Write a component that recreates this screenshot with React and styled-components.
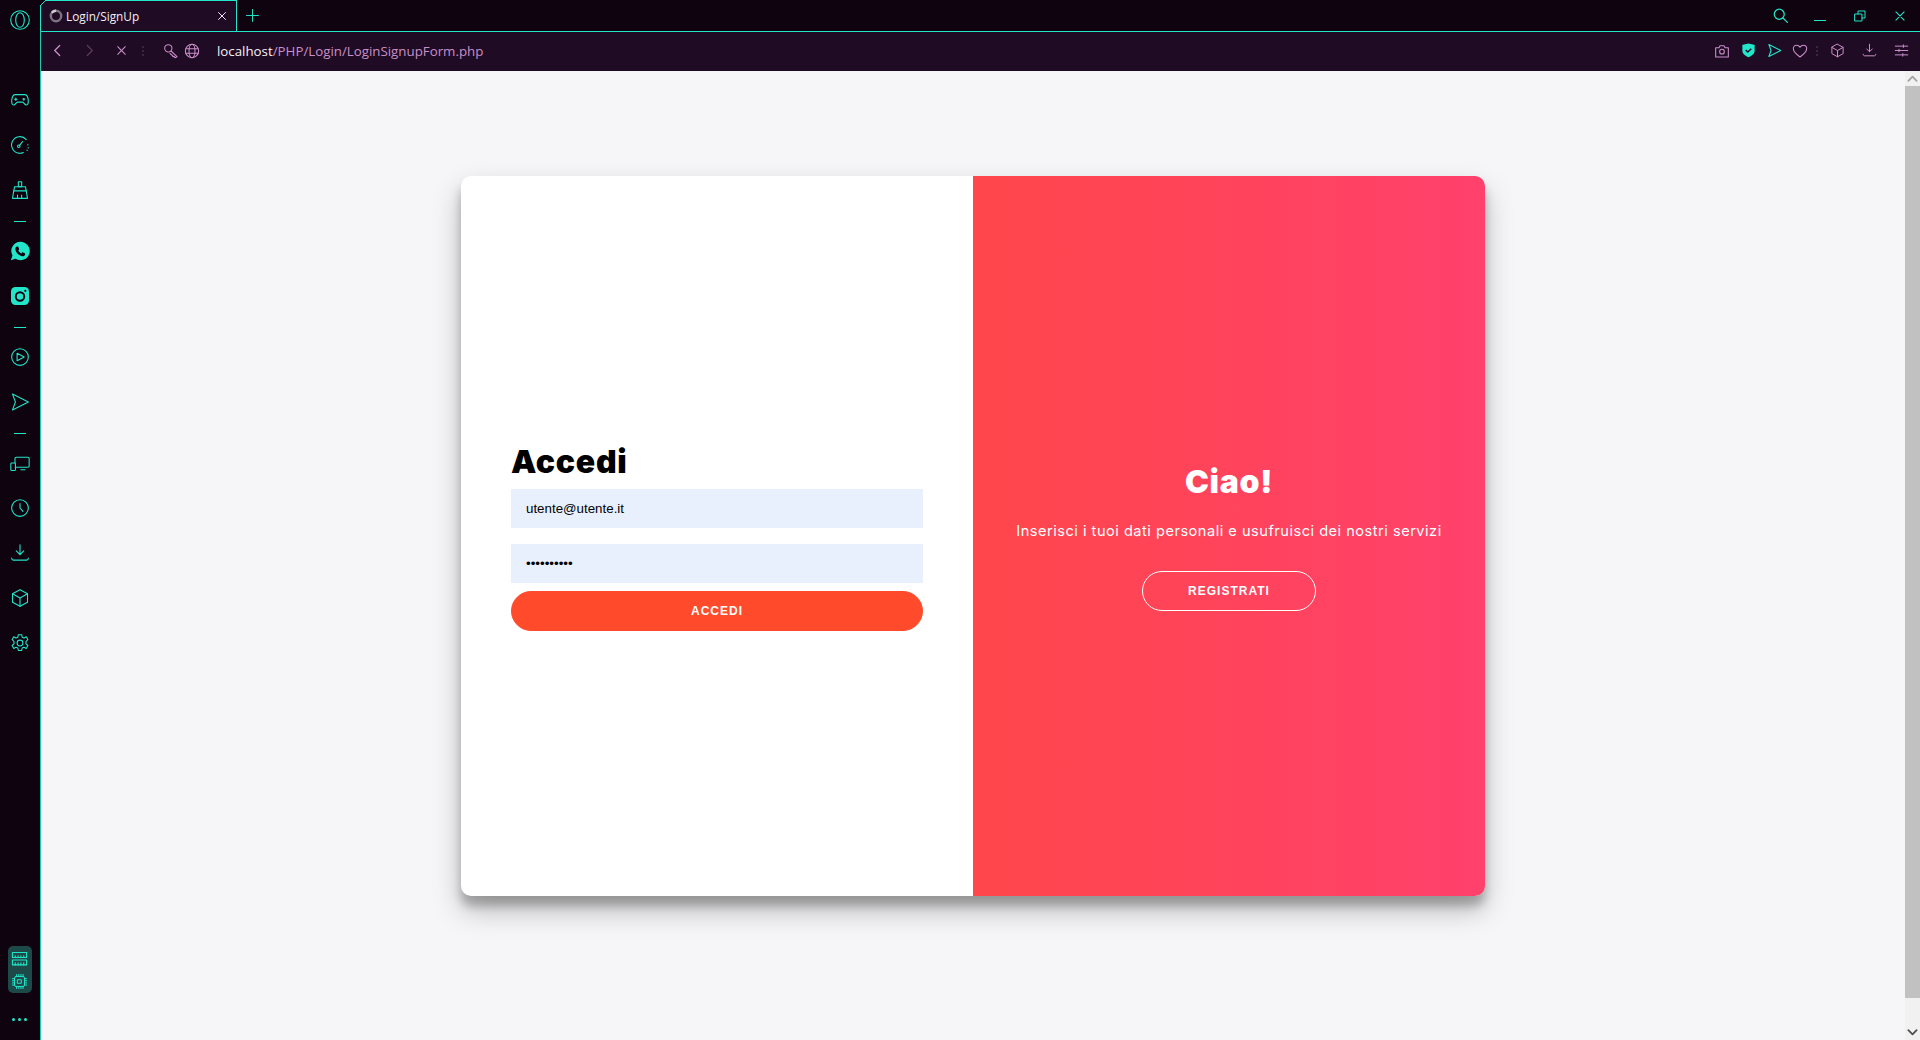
import React from 'react';
import styled, { createGlobalStyle } from 'styled-components';

const TEAL = '#21e6c9';
const PINK = '#c98fc9';

const GlobalStyle = createGlobalStyle`
	html, body {
		margin: 0;
		padding: 0;
		height: 100%;
		overflow: hidden;
		background: #f6f5f7;
	}
	* {
		box-sizing: border-box;
	}
`;

function Icon({ size = 20, color = 'currentColor', width = 1.5, fill = 'none', viewBox = '0 0 24 24', children }) {
	return (
		<svg width={size} height={size} viewBox={viewBox} fill={fill} stroke={color} strokeWidth={width} strokeLinecap="round" strokeLinejoin="round">
			{children}
		</svg>
	);
}

const icons = {
	gamepad: <><path d="M6.500 5.500h11c2.600 0 4 2.400 4.400 6.500.3 3.400-.3 6-2.300 6-2.200 0-3-3.500-4.600-3.500H9c-1.600 0-2.400 3.500-4.600 3.500-2 0-2.600-2.600-2.300-6C2.500 7.900 3.900 5.500 6.500 5.500z" /><path d="M7 9.500v3M5.500 11h3" /><circle cx="16.500" cy="11" r=".8" /></>,
	gauge: <><path d="M19.500 5.500A10 10 0 1 0 12 22a10 10 0 0 0 4-1" /><circle cx="10.500" cy="13.500" r="1.500" /><path d="M11.500 12.500 15 8" /><path d="M21.500 11.500v.5M21.800 15v.5M20.500 18v.5" /></>,
	brush: <><path d="M10 2h4v6h-4z" /><path d="M5.500 8h13l1 5h-15z" /><path d="M4.500 13 3 22h18l-1.500-9" /><path d="M9 22v-4M14 22v-4" /></>,
	play: <><circle cx="12" cy="12" r="10" /><path d="M8.500 7.500 17 12l-8.500 4.500z" /></>,
	send: <path d="M3 2.500 22 12 3 21.500 6.500 12z" />,
	devices: <><path d="M6 12V6.500A1.500 1.500 0 0 1 7.500 5h14A1.500 1.500 0 0 1 23 6.500v9a1.500 1.500 0 0 1-1.500 1.500H7" /><path d="M13 20h5" /><rect x="1" y="12" width="5.500" height="9" rx="1" /></>,
	clock: <><circle cx="12" cy="12" r="10" /><path d="M12 6.500V12l3.500 4" /></>,
	download: <><path d="M12 2v12M7.500 9.500 12 14l4.500-4.500" /><path d="M2 18c0 1.500.8 2.500 2 2.500h16c1.200 0 2-1 2-2.500" /></>,
	box: <><path d="M12 2 21 7v10l-9 5-9-5V7z" /><path d="M3 7l9 5 9-5M12 12v10" /></>,
	gear: <><circle cx="12" cy="12" r="3.500" /><path d="M10 2h4l.6 3 2.200 1 2.700-1.500 2 3.500-2.300 2v3l2.300 2-2 3.500-2.700-1.500-2.200 1-.6 3h-4l-.6-3-2.200-1-2.700 1.500-2-3.500 2.300-2v-3l-2.300-2 2-3.500L7.200 6l2.200-1z" /></>,
	back: <path d="M15.500 4 7.500 12l8 8" />,
	forward: <path d="M8.500 4l8 8-8 8" />,
	close: <path d="M5 5l14 14M19 5 5 19" />,
	key: <><circle cx="8" cy="8" r="5.500" /><path d="M12 12l9 8.500-3 1.500-1.500-2-1.500.5-1-2-1-.5-2.500-2.500" /></>,
	globe: <><circle cx="12" cy="12" r="10" /><ellipse cx="12" cy="12" rx="4.500" ry="10" /><path d="M2.800 8.500h18.400M2.800 15.500h18.400" /></>,
	camera: <><path d="M2.500 7h5l1.500-3h6l1.500 3h5v14h-19z" /><circle cx="12" cy="13" r="3.500" /></>,
	heart: <path d="M12 21C6 16.500 2 13 2 8.500 2 5.500 4.300 3.500 7 3.500c2 0 3.800 1 5 3 1.200-2 3-3 5-3 2.700 0 5 2 5 5 0 4.500-4 8-10 12.500z" />,
	sliders: <><path d="M2 5h20M2 12h20M2 19h20" /><path d="M15 3v4M8 10v4M14 17v4" /></>,
	search: <><circle cx="10" cy="10" r="8" /><path d="M16 16l7 7" /></>,
	restore: <><rect x="2" y="8" width="14" height="14" /><path d="M8 8V2h14v14h-6" /></>,
	ram: <><rect x="2" y="3.500" width="20" height="7" /><rect x="2" y="14" width="20" height="7" /><path d="M6 8v2.500M10 8v2.500M14 8v2.500M18 8v2.500M6 18v3M10 18v3M14 18v3M18 18v3" /></>,
	cpu: <><rect x="5" y="5" width="14" height="14" rx="2" /><rect x="9.500" y="9.500" width="5" height="5" /><path d="M8 2v3M11 2v3M14 2v3M17 2v3M8 19v3M11 19v3M14 19v3M17 19v3M2 8h3M2 11h3M2 14h3M2 17h3M19 8h3M19 11h3M19 14h3M19 17h3" /></>,
};

function WhatsappIcon() {
	return (
		<svg width="20" height="20" viewBox="0 0 24 24" aria-hidden="true">
			<path fill={TEAL} d="M12.500 1A11 11 0 0 0 3 17.500L1 23l5.800-1.700A11 11 0 1 0 12.500 1z" />
			<path fill="#0e030f" d="M8.800 6.500c.6 0 .9.100 1.200.8l.9 2.100c.1.400 0 .8-.3 1.100l-.7.900c.9 1.700 2.100 2.800 3.800 3.600l1-1.100c.3-.3.600-.4 1-.2l2 1c.5.300.6.600.5 1.100-.3 1.700-1.700 2.500-3.200 2.400-4.100-.4-8.300-4.400-8.600-8.600-.1-1.500.9-3.100 2.400-3.100z" />
		</svg>
	);
}

function InstagramIcon() {
	return (
		<svg width="18" height="18" viewBox="0 0 18 18" aria-hidden="true">
			<rect width="18" height="18" rx="4.500" fill={TEAL} />
			<circle cx="9" cy="9.500" r="4.200" fill="none" stroke="#0e030f" strokeWidth="2" />
			<circle cx="14.300" cy="3.800" r="1.100" fill="#0e030f" />
		</svg>
	);
}

function ShieldIcon() {
	return (
		<svg width="13" height="15" viewBox="0 0 14 15" aria-hidden="true">
			<path fill={TEAL} d="M1 1.200 7 0l6 1.200c.4.100.6.300.6.700v6c0 3-2.800 5.600-6.600 7C3.200 13.500.4 10.900.4 7.900v-6c0-.4.200-.6.600-.7z" />
			<path fill="none" stroke="#1f0b23" strokeWidth="1.600" d="M4 7l2.200 2.200L10 5.600" />
		</svg>
	);
}

function Spinner() {
	return (
		<svg width="14" height="14" viewBox="0 0 14 14" aria-hidden="true">
			<circle cx="7" cy="7" r="5.200" fill="none" stroke="#7d7482" strokeWidth="2.400" />
			<path d="M2.800 3.800A5.200 5.200 0 0 1 7 1.800" fill="none" stroke="#cfc9d2" strokeWidth="2.400" />
		</svg>
	);
}

function OperaLogo() {
	return (
		<svg width="20" height="20" viewBox="0 0 20 20" fill="none" stroke={TEAL} strokeWidth="1.100" aria-hidden="true">
			<circle cx="10" cy="10" r="9.300" />
			<ellipse cx="10" cy="10" rx="4.300" ry="7.300" />
		</svg>
	);
}

const sidebarItems = [
	'gamepad', 'gauge', 'brush', 'sep',
	'whatsapp', 'instagram', 'sep',
	'play', 'send', 'sep',
	'devices', 'clock', 'download', 'box', 'gear',
];

export default function App() {
	return (
		<Browser>
			<GlobalStyle />
			<Sidebar>
				<LogoSlot><OperaLogo /></LogoSlot>
				{sidebarItems.map((name, i) => {
					if (name === 'sep') return <SideSep key={i} />;
					return (
						<SideSlot key={i}>
							{name === 'whatsapp' && <WhatsappIcon />}
							{name === 'instagram' && <InstagramIcon />}
							{icons[name] && <Icon size={20} color={TEAL} width={1.3}>{icons[name]}</Icon>}
						</SideSlot>
					);
				})}
				<MonitorPill>
					<Icon size={17} color={TEAL} width={1.5}>{icons.ram}</Icon>
					<Icon size={17} color={TEAL} width={1.4}>{icons.cpu}</Icon>
				</MonitorPill>
				<MoreDots><span /><span /><span /></MoreDots>
			</Sidebar>

			<Main>
				<TabStrip>
					<Tab>
						<CornerCut viewBox="0 0 6 6" width="6" height="6">
							<path d="M0 6V0H6z" fill="#0e030f" />
							<path d="M0 6 6 0" stroke={TEAL} strokeWidth="1" />
						</CornerCut>
						<Spinner />
						<TabTitle>Login/SignUp</TabTitle>
						<TabClose><Icon size={12} color="#f0e8f0" width={2}>{icons.close}</Icon></TabClose>
					</Tab>
					<NewTab>
						<Icon size={13} color={TEAL} width={1.8}><path d="M12 1v22M1 12h22" /></Icon>
					</NewTab>
					<WindowControls>
						<WinBtn><Icon size={15} color={TEAL} width={2}>{icons.search}</Icon></WinBtn>
						<WinBtn><MinimizeBar /></WinBtn>
						<WinBtn><Icon size={12} color={TEAL} width={2}>{icons.restore}</Icon></WinBtn>
						<WinBtn><Icon size={14} color={TEAL} width={1.8}>{icons.close}</Icon></WinBtn>
					</WindowControls>
				</TabStrip>

				<AddressBar>
					<NavBtn><Icon size={15} color={PINK} width={2}>{icons.back}</Icon></NavBtn>
					<NavBtn><Icon size={15} color="#5c3a5e" width={2}>{icons.forward}</Icon></NavBtn>
					<NavBtn><Icon size={13} color={PINK} width={2}>{icons.close}</Icon></NavBtn>
					<BarDots />
					<SiteIcons>
						<Icon size={16} color={PINK} width={1.6}>{icons.key}</Icon>
						<Icon size={16} color={PINK} width={1.6}>{icons.globe}</Icon>
					</SiteIcons>
					<Url><strong>localhost</strong>/PHP/Login/LoginSignupForm.php</Url>
					<BarTools>
						<ToolBtn><Icon size={16} color={PINK} width={1.6}>{icons.camera}</Icon></ToolBtn>
						<ToolBtn><ShieldIcon /></ToolBtn>
						<ToolBtn><Icon size={15} color={TEAL} width={1.8}>{icons.send}</Icon></ToolBtn>
						<ToolBtn><Icon size={16} color={PINK} width={1.6}>{icons.heart}</Icon></ToolBtn>
						<BarDots $right />
						<ToolBtn $wide><Icon size={15} color={PINK} width={1.6}>{icons.box}</Icon></ToolBtn>
						<ToolBtn $wide><Icon size={15} color={PINK} width={1.6}>{icons.download}</Icon></ToolBtn>
						<ToolBtn $wide><Icon size={15} color={PINK} width={1.6}>{icons.sliders}</Icon></ToolBtn>
					</BarTools>
				</AddressBar>

				<Viewport>
					<Page>
						<Card>
							<FormPanel>
								<Title>Accedi</Title>
								<Field type="email" defaultValue="utente@utente.it" />
								<Field type="password" defaultValue="0123456789" />
								<SubmitButton>Accedi</SubmitButton>
							</FormPanel>
							<OverlayPanel>
								<Title $light>Ciao!</Title>
								<Lead>Inserisci i tuoi dati personali e usufruisci dei nostri servizi</Lead>
								<GhostButton>Registrati</GhostButton>
							</OverlayPanel>
						</Card>
					</Page>
					<Scrollbar>
						<ScrollArrow>
							<Icon size={11} color="#a3a3a3" width={4}><path d="M3 17 12 8l9 9" /></Icon>
						</ScrollArrow>
						<ScrollThumb />
						<ScrollArrow>
							<Icon size={11} color="#505050" width={4}><path d="M3 7l9 9 9-9" /></Icon>
						</ScrollArrow>
					</Scrollbar>
				</Viewport>
			</Main>
		</Browser>
	);
}

const Browser = styled.div`
	display: flex;
	width: 1920px;
	height: 1040px;
	overflow: hidden;
`;

const Sidebar = styled.aside`
	display: flex;
	flex-direction: column;
	align-items: center;
	flex: 0 0 41px;
	height: 100%;
	padding-right: 1px;
	background: #0e030f;
	border-right: 1px solid #1fc9b0;
`;

const LogoSlot = styled.div`
	flex: 0 0 77.5px;
	padding-top: 10px;
`;

const SideSlot = styled.div`
	display: flex;
	align-items: center;
	justify-content: center;
	flex: 0 0 45px;
	width: 100%;
`;

const SideSep = styled.div`
	flex: 0 0 1px;
	width: 12px;
	margin: 8px 0 7px;
	background: ${TEAL};
`;

const MonitorPill = styled.div`
	display: flex;
	flex-direction: column;
	align-items: center;
	justify-content: space-between;
	width: 24px;
	height: 47px;
	margin-top: auto;
	padding: 4px 0 3px;
	border-radius: 5px;
	background: #1d4a48;
`;

const MoreDots = styled.div`
	display: flex;
	justify-content: center;
	gap: 3px;
	height: 47px;
	padding-top: 25px;

	span {
		width: 3px;
		height: 3px;
		border-radius: 50%;
		background: ${TEAL};
	}
`;

const Main = styled.div`
	display: flex;
	flex-direction: column;
	flex: 1;
	min-width: 0;
`;

const TabStrip = styled.div`
	display: flex;
	align-items: stretch;
	flex: 0 0 31px;
	background: #0e030f;
	border-bottom: 1px solid ${TEAL};
`;

const Tab = styled.div`
	position: relative;
	display: flex;
	align-items: center;
	flex: 0 0 197px;
	height: 31px;
	margin-left: -1px;
	padding: 0 8px 1px 8px;
	background: #1f0b23;
	border-top: 1px solid ${TEAL};
	border-left: 1px solid ${TEAL};
	border-right: 1px solid ${TEAL};
`;

const CornerCut = styled.svg`
	position: absolute;
	top: -1px;
	left: -1px;
`;

const TabTitle = styled.span`
	margin-left: 3px;
	color: #f4eef4;
	font: 11.800px "Open Sans", sans-serif;
`;

const TabClose = styled.span`
	display: flex;
	margin-left: auto;
`;

const NewTab = styled.div`
	display: flex;
	align-items: center;
	justify-content: center;
	width: 30px;
`;

const WindowControls = styled.div`
	display: flex;
	margin-left: auto;
`;

const WinBtn = styled.div`
	display: flex;
	align-items: center;
	justify-content: center;
	width: 40px;
`;

const MinimizeBar = styled.span`
	width: 12px;
	height: 1px;
	margin-top: 10px;
	background: ${TEAL};
`;

const AddressBar = styled.div`
	display: flex;
	align-items: center;
	flex: 0 0 39px;
	padding: 0 0 2px;
	background: #1f0b23;
`;

const NavBtn = styled.div`
	display: flex;
	align-items: center;
	justify-content: center;
	flex: 0 0 32px;
`;

const BarDots = styled.span`
	flex: 0 0 2px;
	height: 10px;
	margin: ${(p) => (p.$right ? '0 3px' : '0 3px 0 5px')};
	background: repeating-linear-gradient(#3d2440 0 2px, transparent 2px 4px);
`;

const SiteIcons = styled.div`
	display: flex;
	align-items: center;
	gap: 5px;
	margin-left: 16px;
`;

const Url = styled.div`
	margin-left: 17px;
	color: ${PINK};
	font: 13.300px "Open Sans", sans-serif;

	strong {
		color: #f6f0f6;
		font-weight: 400;
	}
`;

const BarTools = styled.div`
	display: flex;
	align-items: center;
	margin-left: auto;
	padding-right: 3px;
`;

const ToolBtn = styled.div`
	display: flex;
	align-items: center;
	justify-content: center;
	width: ${(p) => (p.$wide ? '32px' : '26px')};
`;

const Viewport = styled.div`
	display: flex;
	flex: 1;
	min-height: 0;
`;

const Page = styled.main`
	display: flex;
	justify-content: center;
	flex: 1;
	padding-top: 105px;
	background: #f6f5f7;
`;

const Card = styled.div`
	display: flex;
	width: 1024px;
	height: 720px;
	overflow: hidden;
	border-radius: 10px;
	background: #fff;
	box-shadow: 0 14px 28px rgba(0, 0, 0, 0.25), 0 10px 10px rgba(0, 0, 0, 0.22);
`;

const FormPanel = styled.form`
	display: flex;
	flex-direction: column;
	justify-content: center;
	flex: 0 0 512px;
	padding: 0 50px;
`;

const OverlayPanel = styled.div`
	display: flex;
	flex-direction: column;
	align-items: center;
	justify-content: center;
	flex: 0 0 512px;
	padding: 0 40px;
	background: linear-gradient(to right, #ff464b, #ff416c);
	color: #fff;
`;

const Title = styled.h1`
	margin: 0;
	color: ${(p) => (p.$light ? '#fff' : '#000')};
	font: 900 32px/39px Inter, sans-serif;
	letter-spacing: 0.7px;
`;

const Field = styled.input`
	display: block;
	width: 100%;
	height: 39px;
	margin: 8px 0;
	padding: 0 15px;
	border: none;
	outline: none;
	background: #e8f0fe;
	color: #000;
	font: 13.333px "Liberation Sans", Arial, sans-serif;
`;

const BaseButton = styled.button`
	height: 40px;
	padding: 0;
	border-radius: 20px;
	color: #fff;
	font: 700 12px "Liberation Sans", Arial, sans-serif;
	letter-spacing: 1px;
	text-transform: uppercase;
`;

const SubmitButton = styled(BaseButton)`
	width: 100%;
	border: 1px solid #ff4b2b;
	background: #ff4b2b;
`;

const GhostButton = styled(BaseButton)`
	width: 174px;
	border: 1px solid #fff;
	background: transparent;
`;

const Lead = styled.p`
	margin: 20px 0 30px;
	font: 400 14.600px/20px Inter, sans-serif;
	letter-spacing: 0.5px;
	white-space: nowrap;
`;

const Scrollbar = styled.div`
	display: flex;
	flex-direction: column;
	flex: 0 0 15px;
	background: #f1f1f1;
`;

const ScrollArrow = styled.div`
	display: flex;
	align-items: center;
	justify-content: center;
	flex: 0 0 15px;
`;

const ScrollThumb = styled.div`
	flex: 0 0 912px;
	margin-bottom: auto;
	background: #c1c1c1;
`;
